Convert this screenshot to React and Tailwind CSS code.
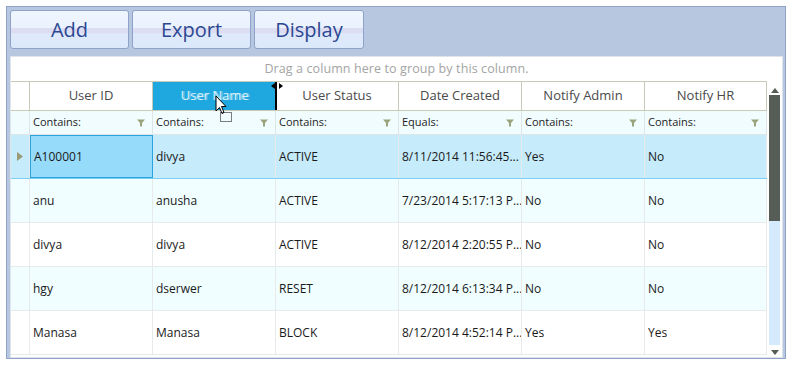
import React from 'react';

const cols = ['User ID', 'User Name', 'User Status', 'Date Created', 'Notify Admin', 'Notify HR'];
const filters = ['Contains:', 'Contains:', 'Contains:', 'Equals:', 'Contains:', 'Contains:'];
const rows = [
  ['A100001', 'divya', 'ACTIVE', '8/11/2014 11:56:45...', 'Yes', 'No'],
  ['anu', 'anusha', 'ACTIVE', '7/23/2014 5:17:13 P...', 'No', 'No'],
  ['divya', 'divya', 'ACTIVE', '8/12/2014 2:20:55 P...', 'No', 'No'],
  ['hgy', 'dserwer', 'RESET', '8/12/2014 6:13:34 P...', 'No', 'No'],
  ['Manasa', 'Manasa', 'BLOCK', '8/12/2014 4:52:14 P...', 'Yes', 'Yes'],
];

const gridCols = 'grid grid-cols-[19px_123px_123px_123px_123px_123px_122px]';

function ToolButton({ label, w }) {
  return (
    <button
      type="button"
      className={`${w} h-[39px] rounded-[3px] border border-[#8ea3c9] bg-[linear-gradient(#f0f6ff_0%,#eaf2fe_45%,#dcdcf2_46%,#dcdcf2_60%,#dfeafc_61%,#dbe8fb_100%)] text-[20px] text-[#2c4791] flex items-center justify-center`}
    >
      {label}
    </button>
  );
}

function Funnel() {
  return (
    <svg width="8" height="8" viewBox="0 0 8 8">
      <path d="M0 0.5h8L5 4v3.5H3V4z" fill="#9aa47c" />
    </svg>
  );
}

function DragCursor() {
  return (
    <svg className="absolute left-[215px] top-[95px]" width="20" height="30" viewBox="0 0 20 30">
      <path d="M1 1v15l3.5-3.5 2.5 6 2-1-2.5-6H11z" fill="white" stroke="black" strokeWidth="1" />
      <rect x="5.5" y="17.5" width="11" height="9" fill="none" stroke="black" strokeWidth="1" strokeDasharray="1 1" />
    </svg>
  );
}

export default function App() {
  return (
    <div className="relative w-[798px] h-[373px] bg-white font-['Open_Sans',sans-serif]">
      <div className="absolute left-[6px] top-[6px] w-[780px] h-[353px] border border-[#8fa3c7] bg-[#b8c7e0] pt-[3px] pl-[3px] pr-[2px] flex flex-col">
        <div className="flex gap-[3px]">
          <ToolButton label="Add" w="w-[119px]" />
          <ToolButton label="Export" w="w-[119px]" />
          <ToolButton label="Display" w="w-[110px]" />
        </div>
        <div className="mt-[7px] flex-1 bg-white border border-[#dfe3ea] flex flex-col overflow-hidden">
          <div className="h-[24px] shrink-0 flex items-center justify-center text-[12.5px] text-[#a4a4a4] tracking-[0.1px]">
            Drag a column here to group by this column.
          </div>
          <div className="flex flex-1 min-h-0">
            <div className="w-[756px] flex flex-col">
              <div className={`${gridCols} h-[30px] shrink-0 border-t border-b border-[#c9c9b8]`}>
                <div className="border-r border-[#c9c9b8]" />
                {cols.map((c, i) => (
                  <div
                    key={c}
                    className={`relative flex items-center justify-center text-[13px] ${i === 1 ? 'bg-[#1fa7e0] text-[#d8f1fb]' : 'text-[#4a4a4a] border-r border-[#c9c9b8]'}`}
                  >
                    {i === 1 && <span className="absolute left-[29px] text-[#ffffff]/40">User Name</span>}
                    <span className="relative">{c}</span>
                    {i === 1 && (
                      <>
                        <div className="absolute right-[-1px] top-0 bottom-0 w-[2px] bg-black" />
                        <svg className="absolute right-[-8px] top-[1px]" width="14" height="6" viewBox="0 0 14 6">
                          <path d="M5 0v6L1 3z" fill="black" />
                          <path d="M9 0v6l4-3z" fill="black" />
                        </svg>
                      </>
                    )}
                  </div>
                ))}
              </div>
              <div className={`${gridCols} h-[24px] shrink-0 bg-[#f1fcfe] border-b border-[#dde5e6]`}>
                <div className="border-r border-[#dde5e6]" />
                {filters.map((f, i) => (
                  <div key={i} className="flex items-center justify-between pl-[3px] pr-[7px] text-[11px] text-[#1e1e1e] border-r border-[#dde5e6]">
                    <span>{f}</span>
                    <Funnel />
                  </div>
                ))}
              </div>
              {rows.map((r, ri) => {
                const sel = ri === 0;
                const bg = sel ? 'bg-[#c6ebfb]' : ri % 2 === 1 ? 'bg-[#f0feff]' : 'bg-white';
                return (
                  <div key={ri} className={`${gridCols} h-[44px] shrink-0 ${bg} border-b ${sel ? 'border-[#80cef3]' : 'border-[#e6eaea]'}`}>
                    <div className="flex items-center justify-center border-r border-[#e6eaea]">
                      {sel && (
                        <svg width="6" height="9" viewBox="0 0 6 9">
                          <path d="M0 0l6 4.5L0 9z" fill="#9a9a78" />
                        </svg>
                      )}
                    </div>
                    {r.map((v, ci) => (
                      <div
                        key={ci}
                        className={`flex items-center pl-[3px] text-[12px] text-[#1a1a1a] whitespace-nowrap overflow-hidden ${sel && ci === 0 ? 'bg-[#97dbfb] border border-[#2aa3dd]' : 'border-r border-[#e6eaea]'}`}
                      >
                        {v}
                      </div>
                    ))}
                  </div>
                );
              })}
            </div>
            <div className="w-[15px] mt-[5px] mb-[2px] flex flex-col items-center">
              <svg width="8" height="5" viewBox="0 0 8 5" className="mt-[2px]">
                <path d="M0 5L4 0l4 5z" fill="#555c55" />
              </svg>
              <div className="w-[11px] h-[126px] mt-[2px] bg-[#565d56]" />
              <div className="w-[11px] h-[125px] bg-[#d5eafc]" />
              <svg width="8" height="5" viewBox="0 0 8 5" className="mt-[5px]">
                <path d="M0 0h8L4 5z" fill="#555c55" />
              </svg>
            </div>
          </div>
        </div>
      </div>
      <DragCursor />
    </div>
  );
}
